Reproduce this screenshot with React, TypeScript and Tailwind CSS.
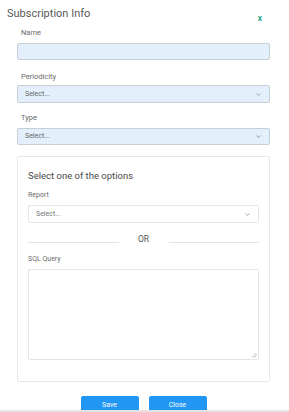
import React from "react";

function Chevron() {
  return (
    <svg width="5" height="3" viewBox="0 0 5 3" className="shrink-0">
      <path d="M0.6 0.5 L2.5 2.4 L4.4 0.5" fill="none" stroke="#888" strokeWidth="0.8" />
    </svg>
  );
}

export default function App() {
  return (
    <div
      className="w-[289px] h-[412px] bg-white relative overflow-hidden text-[#666]"
      style={{ fontFamily: "Roboto, 'Liberation Sans', sans-serif" }}
    >
      <div className="flex items-start justify-between pl-[7px] pr-[27px] pt-[6px]">
        <div className="text-[11px] leading-[16px] text-[#595959]">Subscription Info</div>
        <div className="text-[8.5px] leading-[10px] mt-[7px] text-[#00a078] font-medium">x</div>
      </div>

      <div className="pl-[17px] pr-[19px]">
        <div className="pl-[4px] mt-[5px] text-[7.5px] leading-[10px] text-[#6a6a6a]">Name</div>
        <div className="mt-[5px] h-[17px] bg-[#e3f0fc] border border-[#c6ced6] rounded-[2px]" />

        <div className="pl-[4px] mt-[12px] text-[7.5px] leading-[10px] text-[#6a6a6a]">Periodicity</div>
        <div className="mt-[3px] h-[18px] bg-[#e3f0fc] border border-[#c6ced6] rounded-[2px] flex items-center justify-between pl-[7px] pr-[8px]">
          <span className="text-[7px] text-[#666]">Select...</span>
          <Chevron />
        </div>

        <div className="pl-[4px] mt-[10px] text-[7.5px] leading-[10px] text-[#6a6a6a]">Type</div>
        <div className="mt-[5px] h-[17px] bg-[#e3f0fc] border border-[#c6ced6] rounded-[2px] flex items-center justify-between pl-[7px] pr-[8px]">
          <span className="text-[7px] text-[#666]">Select...</span>
          <Chevron />
        </div>

        <div className="mt-[11px] h-[226px] border border-[#e8e8e8] rounded-[2px] px-[10px]">
          <div className="mt-[12px] text-[9.5px] leading-[13px] text-[#4a4a4a]">Select one of the options</div>
          <div className="mt-[8px] text-[7px] leading-[10px] text-[#6a6a6a]">Report</div>
          <div className="mt-[5px] h-[18px] border border-[#e5e5e5] rounded-[2px] flex items-center justify-between pl-[7px] pr-[8px]">
            <span className="text-[7px] text-[#777]">Select...</span>
            <Chevron />
          </div>
          <div className="mt-[10px] flex items-center">
            <div className="flex-1 h-px bg-[#e4e4e4] mt-[7px]" />
            <div className="w-[50px] text-center text-[8.5px] leading-[12px] text-[#555]">OR</div>
            <div className="flex-1 h-px bg-[#e4e4e4] mt-[7px]" />
          </div>
          <div className="mt-[9px] text-[7px] leading-[10px] text-[#6a6a6a]">SQL Query</div>
          <div className="mt-[5px] h-[91px] border border-[#e5e5e5] rounded-[2px] relative">
            <svg width="6" height="6" viewBox="0 0 6 6" className="absolute right-[1px] bottom-[1px]">
              <path d="M5.5 1 L1 5.5 M5.5 3.5 L3.5 5.5" stroke="#999" strokeWidth="0.7" />
            </svg>
          </div>
        </div>
      </div>

      <div className="flex justify-center gap-[10px] mt-[14px] pr-[2px]">
        <div className="w-[58px] h-[18px] bg-[#2196f3] rounded-[2px] flex items-center justify-center text-white text-[7px]">Save</div>
        <div className="w-[58px] h-[18px] bg-[#2196f3] rounded-[2px] flex items-center justify-center text-white text-[7px]">Close</div>
      </div>

      <div className="absolute left-0 right-0 bottom-0 h-[2px] bg-[#e4e4e4]" />
    </div>
  );
}
